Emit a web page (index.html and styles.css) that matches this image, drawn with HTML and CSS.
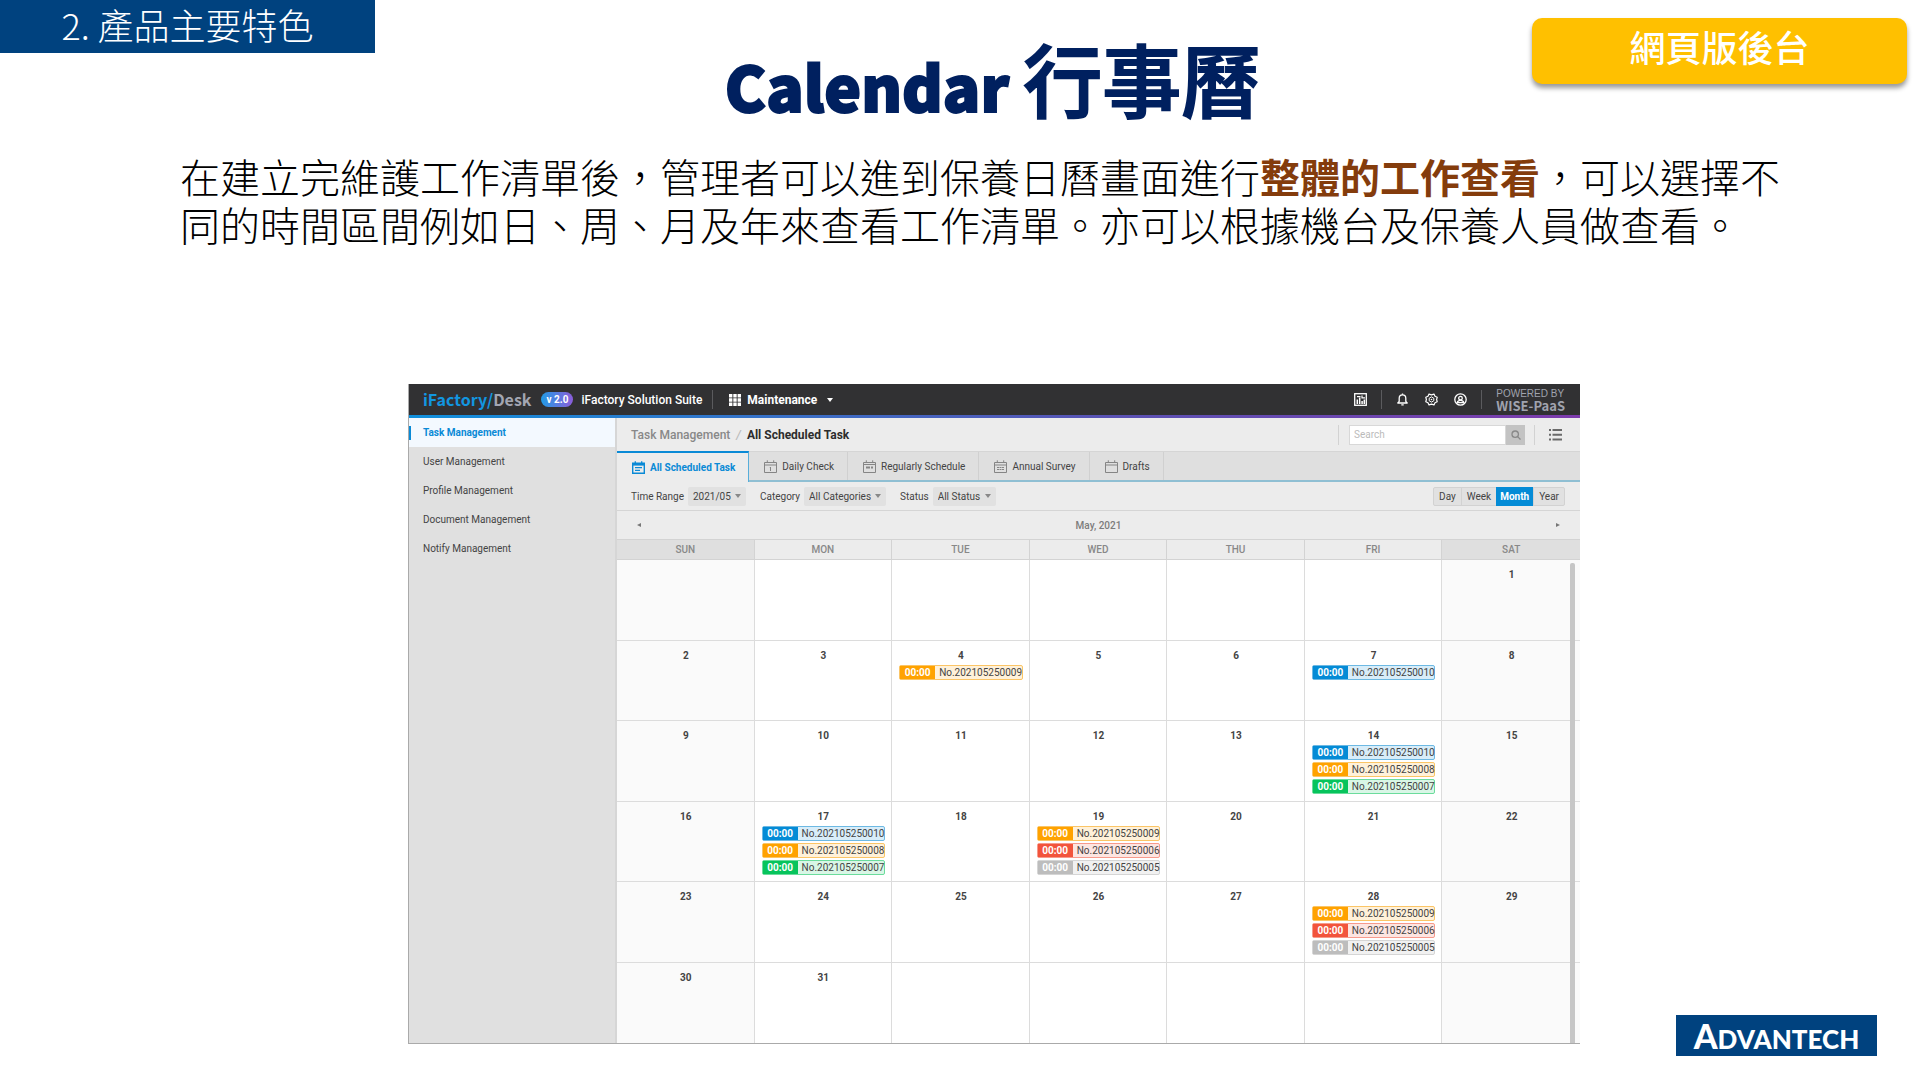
FILE: index.html
```html
<!DOCTYPE html>
<html lang="zh-Hant">
<head>
<meta charset="utf-8">
<meta name="viewport" content="width=device-width, initial-scale=1">
<title>Calendar 行事曆</title>
<link rel="stylesheet" href="styles.css">
</head>
<body>
<header class="slide-head">
  <p class="section-tag">2. 產品主要特色</p>
  <h1 class="slide-title"><span class="latin">Calendar</span><span class="han">行事曆</span></h1>
  <p class="platform-tag">網頁版後台</p>
</header>
<p class="intro">在建立完維護工作清單後，管理者可以進到保養日曆畫面進行<strong>整體的工作查看</strong>，可以選擇不同的時間區間例如日、周、月及年來查看工作清單。亦可以根據機台及保養人員做查看。</p>

<div class="stage">
<section class="app">
  <header class="topbar">
    <span class="brand">iFactory/<span>Desk</span></span>
    <span class="version">v 2.0</span>
    <span class="suite">iFactory Solution Suite</span>
    <i class="rule"></i>
    <button class="module" type="button">
      <svg width="12" height="12" viewBox="0 0 12 12" fill="#fff"><path d="M0 0h3.4v3.4H0zM4.3 0h3.4v3.4H4.3zM8.6 0H12v3.4H8.6zM0 4.3h3.4v3.4H0zM4.3 4.3h3.4v3.4H4.3zM8.6 4.3H12v3.4H8.6zM0 8.6h3.4V12H0zM4.3 8.6h3.4V12H4.3zM8.6 8.6H12V12H8.6z"/></svg>
      Maintenance
      <i class="caret light"></i>
    </button>
    <nav class="tools">
      <button type="button" aria-label="Dashboard"><svg width="13" height="13" viewBox="0 0 13 13" fill="none" stroke="#fff"><rect x=".7" y=".7" width="11.6" height="11.6" stroke-width="1.300"/><path d="M3.300 11V6.500M5.700 11V4.500M8.100 11V8M10.300 11V6.500" stroke-width="1.500"/><path d="M3 3.600h3.500M8 2.600v3M8 4.800h3" stroke-width="1.200"/></svg></button>
      <i class="rule"></i>
      <button type="button" aria-label="Notifications"><svg width="13" height="13" viewBox="0 0 13 13" fill="none" stroke="#fff" stroke-width="1.300"><path d="M1.800 10h9.400L9.800 8.400V5.200C9.800 3.200 8.500 1.800 6.500 1.800S3.200 3.200 3.200 5.200v3.200z" stroke-linejoin="round"/><path d="M6.500 1.800V.5M5.300 11.800h2.400"/></svg></button>
      <button type="button" aria-label="Settings"><svg width="13" height="13" viewBox="0 0 13 13" fill="none" stroke="#fff" stroke-width="1.200" stroke-linejoin="round"><path d="M4 1.100 6.500 1.900 9 1.100l1 2.200 2.200 1-.6 2.200.6 2.200-2.200 1-1 2.200-2.500-.8-2.500.8-1-2.200-2.200-1 .6-2.200-.6-2.200 2.200-1z"/><path d="M6.500 3.900 8.800 5.200v2.600L6.500 9.100 4.200 7.800V5.200z" stroke-width="1"/><circle cx="6.500" cy="6.500" r=".8" fill="#fff" stroke="none"/></svg></button>
      <button type="button" aria-label="Account"><svg width="13" height="13" viewBox="0 0 13 13" fill="none" stroke="#fff" stroke-width="1.300"><circle cx="6.500" cy="6.500" r="5.700"/><circle cx="6.500" cy="5.200" r="1.800"/><path d="M3.200 9.700c.4-1.700 1.600-2.300 3.300-2.300s2.900.6 3.300 2.300z"/></svg></button>
      <i class="rule"></i>
    </nav>
    <p class="powered">POWERED BY<b>WISE-PaaS</b></p>
  </header>

  <div class="body">
    <nav class="sidebar">
      <a class="active" href="#task">Task Management</a>
      <a href="#user">User Management</a>
      <a href="#profile">Profile Management</a>
      <a href="#document">Document Management</a>
      <a href="#notify">Notify Management</a>
    </nav>

    <main class="content">
      <div class="crumbs">
        <a href="#task">Task Management</a><i>/</i><b>All Scheduled Task</b>
        <form class="search">
          <input type="search" placeholder="Search" aria-label="Search">
          <button type="button" aria-label="Search"><svg width="10" height="10" viewBox="0 0 10 10" fill="none" stroke="#888" stroke-width="1.300"><circle cx="4.200" cy="4.200" r="3.200"/><path d="m6.600 6.600 2.900 2.900"/></svg></button>
        </form>
        <button class="list" type="button" aria-label="List view"><svg width="13" height="12" viewBox="0 0 13 12" fill="#6a6a6a"><path d="M0 0h2v2H0zM3.500 0H13v2H3.500zM0 4.700h2v2H0zM3.500 4.700H13v2H3.500zM0 9.500h2v2H0zM3.500 9.500H13v2H3.500z"/></svg></button>
      </div>

      <div class="tabs">
        <button class="tab on" type="button"><svg width="13" height="13" viewBox="0 0 13 13" fill="none" stroke="currentColor"><path d="M.7 2.200h11.600v10H.7z" stroke-width="1.400"/><path d="M.7 3.600h11.600" stroke-width="2"/><path d="M3.300.3v2M9.700.3v2M3 6.700h7M3 9.300h5" stroke-width="1.300"/></svg>All Scheduled Task</button>
        <button class="tab" type="button"><svg width="13" height="13" viewBox="0 0 13 13" fill="none" stroke="currentColor"><path d="M.5 2.500h12v10H.5zM.5 5h12M3.300.3v2.200M9.700.3v2.200M6.500 7v4M5.800 7.500h.7"/></svg>Daily Check</button>
        <button class="tab" type="button"><svg width="13" height="13" viewBox="0 0 13 13" fill="none" stroke="currentColor"><path d="M.5 2.500h12v10H.5zM.5 4.500h12M3.300.3v2.200M9.700.3v2.200"/><path d="M3 7.500h4M8 7.500h2" stroke-width="2"/></svg>Regularly Schedule</button>
        <button class="tab" type="button"><svg width="13" height="13" viewBox="0 0 13 13" fill="none" stroke="currentColor"><path d="M.5 2.500h12v10H.5zM.5 5h12M3.300.3v2.200M9.700.3v2.200"/><path d="M3 7.500h7M3 9.500h7" stroke-dasharray="2 .5"/></svg>Annual Survey</button>
        <button class="tab" type="button"><svg width="13" height="13" viewBox="0 0 13 13" fill="none" stroke="currentColor"><path d="M.5 2.500h12v10H.5zM.5 5h12M3.300.3v2.200M9.700.3v2.200"/></svg>Drafts</button>
      </div>

      <div class="filters">
        <label for="range">Time Range</label>
        <span class="pick"><select id="range"><option>2021/05</option></select><i class="caret"></i></span>
        <label for="category">Category</label>
        <span class="pick"><select id="category"><option>All Categories</option></select><i class="caret"></i></span>
        <label for="status">Status</label>
        <span class="pick"><select id="status"><option>All Status</option></select><i class="caret"></i></span>
        <div class="views">
          <button type="button">Day</button><button type="button">Week</button><button class="on" type="button">Month</button><button type="button">Year</button>
        </div>
      </div>

      <div class="month">
        <button class="prev" type="button" aria-label="Previous month"></button>
        <h2>May, 2021</h2>
        <button class="next" type="button" aria-label="Next month"></button>
      </div>

      <div class="calendar">
      <table>
        <thead><tr><th>SUN</th><th>MON</th><th>TUE</th><th>WED</th><th>THU</th><th>FRI</th><th>SAT</th></tr></thead>
        <tbody>
        <tr><td></td><td></td><td></td><td></td><td></td><td></td><td><b>1</b></td></tr>
        <tr><td><b>2</b></td><td><b>3</b></td>
          <td><b>4</b><a class="event orange" href="#t9"><time>00:00</time><span>No.202105250009</span></a></td>
          <td><b>5</b></td><td><b>6</b></td>
          <td><b>7</b><a class="event blue" href="#t10"><time>00:00</time><span>No.202105250010</span></a></td>
          <td><b>8</b></td></tr>
        <tr><td><b>9</b></td><td><b>10</b></td><td><b>11</b></td><td><b>12</b></td><td><b>13</b></td>
          <td><b>14</b><a class="event blue" href="#t10"><time>00:00</time><span>No.202105250010</span></a><a class="event orange" href="#t8"><time>00:00</time><span>No.202105250008</span></a><a class="event green" href="#t7"><time>00:00</time><span>No.202105250007</span></a></td>
          <td><b>15</b></td></tr>
        <tr><td><b>16</b></td>
          <td><b>17</b><a class="event blue" href="#t10"><time>00:00</time><span>No.202105250010</span></a><a class="event orange" href="#t8"><time>00:00</time><span>No.202105250008</span></a><a class="event green" href="#t7"><time>00:00</time><span>No.202105250007</span></a></td>
          <td><b>18</b></td>
          <td><b>19</b><a class="event orange" href="#t9"><time>00:00</time><span>No.202105250009</span></a><a class="event red" href="#t6"><time>00:00</time><span>No.202105250006</span></a><a class="event gray" href="#t5"><time>00:00</time><span>No.202105250005</span></a></td>
          <td><b>20</b></td><td><b>21</b></td><td><b>22</b></td></tr>
        <tr><td><b>23</b></td><td><b>24</b></td><td><b>25</b></td><td><b>26</b></td><td><b>27</b></td>
          <td><b>28</b><a class="event orange" href="#t9"><time>00:00</time><span>No.202105250009</span></a><a class="event red" href="#t6"><time>00:00</time><span>No.202105250006</span></a><a class="event gray" href="#t5"><time>00:00</time><span>No.202105250005</span></a></td>
          <td><b>29</b></td></tr>
        <tr><td><b>30</b></td><td><b>31</b></td><td></td><td></td><td></td><td></td><td></td></tr>
        </tbody>
      </table>
      <i class="scrollbar"></i>
      </div>
    </main>
  </div>
</section>
<div class="company"><span>A</span>DVANTECH</div>
</div>
</body>
</html>
```
FILE: styles.css
```css
* { box-sizing: border-box; }

body {
  margin: 0;
  background: #fff;
  color: #000;
  font-family: "Noto Sans CJK TC", sans-serif;
}

p, h1, h2 { margin: 0; }

a { color: inherit; text-decoration: none; }

button {
  padding: 0;
  border: 0;
  background: none;
  color: inherit;
  font: inherit;
}

svg { display: block; flex: none; }

/* Slide heading */
.slide-head {
  display: grid;
  grid-template-columns: 375px 1fr 375px;
  align-items: start;
  padding-right: 13px;
}

.section-tag {
  height: 53px;
  background: #00427f;
  color: #fff;
  font-size: 36px;
  font-weight: 300;
  line-height: 48px;
  text-align: center;
}

.slide-title {
  display: flex;
  justify-content: center;
  align-items: baseline;
  gap: 14px;
  padding: 30px 0 0 78px;
  color: #00205f;
  line-height: 96px;
}

.latin {
  font-size: 62px;
  font-weight: 900;
  -webkit-text-stroke: 2px #00205f;
}

.han {
  font-size: 79px;
  font-weight: 500;
  -webkit-text-stroke: 2px #00205f;
}

.platform-tag {
  height: 66px;
  margin-top: 18px;
  border-radius: 10px;
  background: #ffc000;
  box-shadow: 0 4px 5px rgba(0, 0, 0, .4);
  color: #fff;
  font-size: 36px;
  font-weight: 500;
  line-height: 56px;
  text-align: center;
}

.intro {
  padding: 19px 140px 0 180px;
  font-size: 40px;
  font-weight: 300;
  line-height: 48px;
}

.intro strong { color: #843c0c; font-weight: 700; }

.stage {
  display: grid;
  grid-template-columns: 408fr 1172fr 340fr;
  margin-top: 136px;
}

/* Application window */
.app {
  grid-column: 2;
  margin-bottom: 12px;
  border: solid #aaa;
  border-width: 0 0 1px 1px;
  color: #444;
  font-family: Roboto, sans-serif;
  font-size: 10px;
}

.topbar {
  display: flex;
  align-items: center;
  height: 34px;
  padding: 0 15px 0 14px;
  border-bottom: 3px solid;
  border-image: linear-gradient(90deg, #1090dc, #5a52b4 60%, #7d3bac) 1;
  background: #313133;
  color: #fff;
}

.brand {
  color: #1296e0;
  font-family: "Noto Sans CJK TC", sans-serif;
  font-size: 16px;
  font-weight: 700;
  line-height: 31px;
}

.brand span { color: #a3a6b2; }

.version {
  width: 32px;
  margin: 0 8px 0 10px;
  border-radius: 8px;
  background: linear-gradient(90deg, #229be5, #8b5ddb);
  font-weight: 700;
  line-height: 15px;
  text-align: center;
}

.suite { font-size: 12px; font-weight: 500; }

.rule { width: 1px; height: 19px; background: #5b5b5e; }

.suite + .rule { margin: 0 16px 0 10px; }

.module {
  display: flex;
  align-items: center;
  gap: 6px;
  font-size: 12px;
  font-weight: 700;
}

.caret {
  border: solid transparent;
  border-width: 4px 3px 0;
  border-top-color: #888;
}

.caret.light { margin-left: 4px; border-top-color: #fff; }

.tools {
  display: flex;
  align-items: center;
  gap: 16px;
  margin-left: auto;
}

.tools .rule { margin: 0 -2px; }
.tools .rule:last-child { margin-right: 0; }

.powered {
  margin-left: 14px;
  color: #a0a3ae;
  font-family: "Liberation Sans", sans-serif;
  line-height: 11px;
}

.powered b {
  display: block;
  font-family: "Noto Sans CJK TC", sans-serif;
  font-size: 13px;
  line-height: 13px;
}

.body { display: grid; grid-template-columns: 208px 1fr; }

.sidebar {
  border-right: 2px solid #d6d6d6;
  background: #e0e0e0;
}

.sidebar a {
  display: block;
  padding-left: 14px;
  line-height: 29px;
}

.sidebar .active {
  background: linear-gradient(#0a8ad6, #0a8ad6) 0 8px / 2px 14px no-repeat #f3f9ff;
  color: #0a8ad6;
  font-weight: 700;
}

.content { min-width: 0; background: #ececec; }

.crumbs {
  display: flex;
  align-items: center;
  height: 33px;
  padding: 0 18px 0 14px;
  color: #888;
  font-size: 12px;
  font-weight: 500;
}

.crumbs i { margin: 0 6px; color: #bbb; }

.crumbs b { color: #2c2c2c; font-weight: 700; }

.search {
  display: flex;
  margin-left: auto;
  padding: 0 9px 0 10px;
  border: solid #d2d2d2;
  border-width: 0 1px;
}

.search input {
  width: 157px;
  height: 20px;
  padding: 0 4px;
  border: 1px solid #d8d8d8;
  background: #fff;
  font: 10px Roboto, sans-serif;
}

.search input::placeholder { color: #bbb; }

.search button {
  display: grid;
  place-items: center;
  width: 19px;
  background: #c3c3c3;
}

.list { margin-left: 14px; }

.tabs {
  display: flex;
  height: 31px;
  border-top: 1px solid #d5d5d5;
  background: linear-gradient(#8fbfd3, #8fbfd3) 0 100% / 100% 2px no-repeat #dfdfdf;
}

.tab {
  display: flex;
  align-items: center;
  gap: 5px;
  margin-bottom: 2px;
  padding: 0 13px 0 15px;
  border-right: 1px solid #d0d0d0;
}

.tab svg { color: #858585; }

.tab.on {
  margin: -1px 0 0;
  border: solid #58aeda;
  border-width: 2px 1px 0 0;
  border-top-color: #0a8ad6;
  background: #ececec;
  color: #0a8ad6;
  font-weight: 700;
}

.tab.on svg { color: #0a8ad6; }

.filters {
  display: flex;
  align-items: center;
  height: 29px;
  padding: 0 15px 0 14px;
  border-bottom: 1px solid #d5d5d5;
}

.pick {
  display: flex;
  align-items: center;
  gap: 4px;
  height: 19px;
  margin: 0 14px 0 4px;
  padding: 0 5px;
  border-radius: 2px;
  background: #e1e1e1;
}

.pick select {
  padding: 0;
  border: 0;
  background: none;
  color: inherit;
  font: inherit;
  appearance: none;
}

.views {
  display: flex;
  height: 19px;
  margin-left: auto;
  border: 1px solid #d2d2d2;
  border-radius: 2px;
  background: #e1e1e1;
}

.views button { padding: 0 5px; }
.views button + button { border-left: 1px solid #d2d2d2; }

.views .on {
  margin: -1px 0;
  padding: 0 4px;
  border: 0;
  background: #048bd6;
  color: #fff;
  font-weight: 700;
}

.month {
  display: flex;
  align-items: center;
  justify-content: space-between;
  height: 28px;
  padding: 0 20px;
}

.month h2 { color: #7c7c7c; font-size: 10px; font-weight: 500; }

.prev, .next {
  border: solid transparent;
  border-width: 2px 4px 2px 0;
  border-right-color: #777;
}

.next { border-width: 2px 0 2px 4px; border-left-color: #777; }

.calendar { position: relative; }

table {
  width: 100%;
  height: 504px;
  border-spacing: 0;
  background: #fff;
  table-layout: fixed;
}

th {
  height: 21px;
  padding: 0;
  border: solid #d3d3d3;
  border-width: 1px 1px 1px 0;
  background: #ececec;
  color: #888;
  font-weight: 500;
}

td {
  height: 80px;
  padding: 8px 6px 0 7px;
  border: solid #dcdcdc;
  border-width: 0 1px 1px 0;
  vertical-align: top;
}

th:first-child, th:last-child { background: #dfdfdf; }
td:first-child, td:last-child { background: #fafafa; }
th:last-child, td:last-child { border-right: 0; }
tr:last-child td { border-bottom: 0; }

td b { display: block; line-height: 14px; margin-bottom: 2px; text-align: center; }

.event {
  display: flex;
  height: 15px;
  margin-bottom: 2px;
  border: 1px solid var(--line);
  border-radius: 2px;
  background: var(--soft);
  line-height: 13px;
}

.event time {
  flex: none;
  width: 35px;
  background: var(--solid);
  color: #fff;
  font-weight: 700;
  text-align: center;
}

.event span { padding-left: 4px; white-space: nowrap; }

.blue { --solid: #048bd6; --line: #6db9e3; --soft: #d8edf9; }
.orange { --solid: #ffa200; --line: #fbc566; --soft: #fff1d9; }
.green { --solid: #07c45c; --line: #6bdc9c; --soft: #d9f6e6; }
.red { --solid: #f2543c; --line: #f79a8c; --soft: #fde5e1; }
.gray { --solid: #bdbdbd; --line: #d5d5d5; --soft: #f1f1f1; }

.scrollbar {
  position: absolute;
  top: 24px;
  right: 5px;
  bottom: 0;
  width: 5px;
  border-radius: 2px 2px 0 0;
  background: #c6c6c6;
}

/* Company mark */
.company {
  grid-column: 3;
  align-self: end;
  justify-self: end;
  width: 201px;
  height: 41px;
  margin-right: 43px;
  padding-top: 4px;
  background: #00427f;
  color: #fff;
  font-family: Lato, sans-serif;
  font-size: 26px;
  font-weight: 900;
  line-height: 35px;
  text-align: center;
}

.company span { font-size: 34px; line-height: 34px; }
```
